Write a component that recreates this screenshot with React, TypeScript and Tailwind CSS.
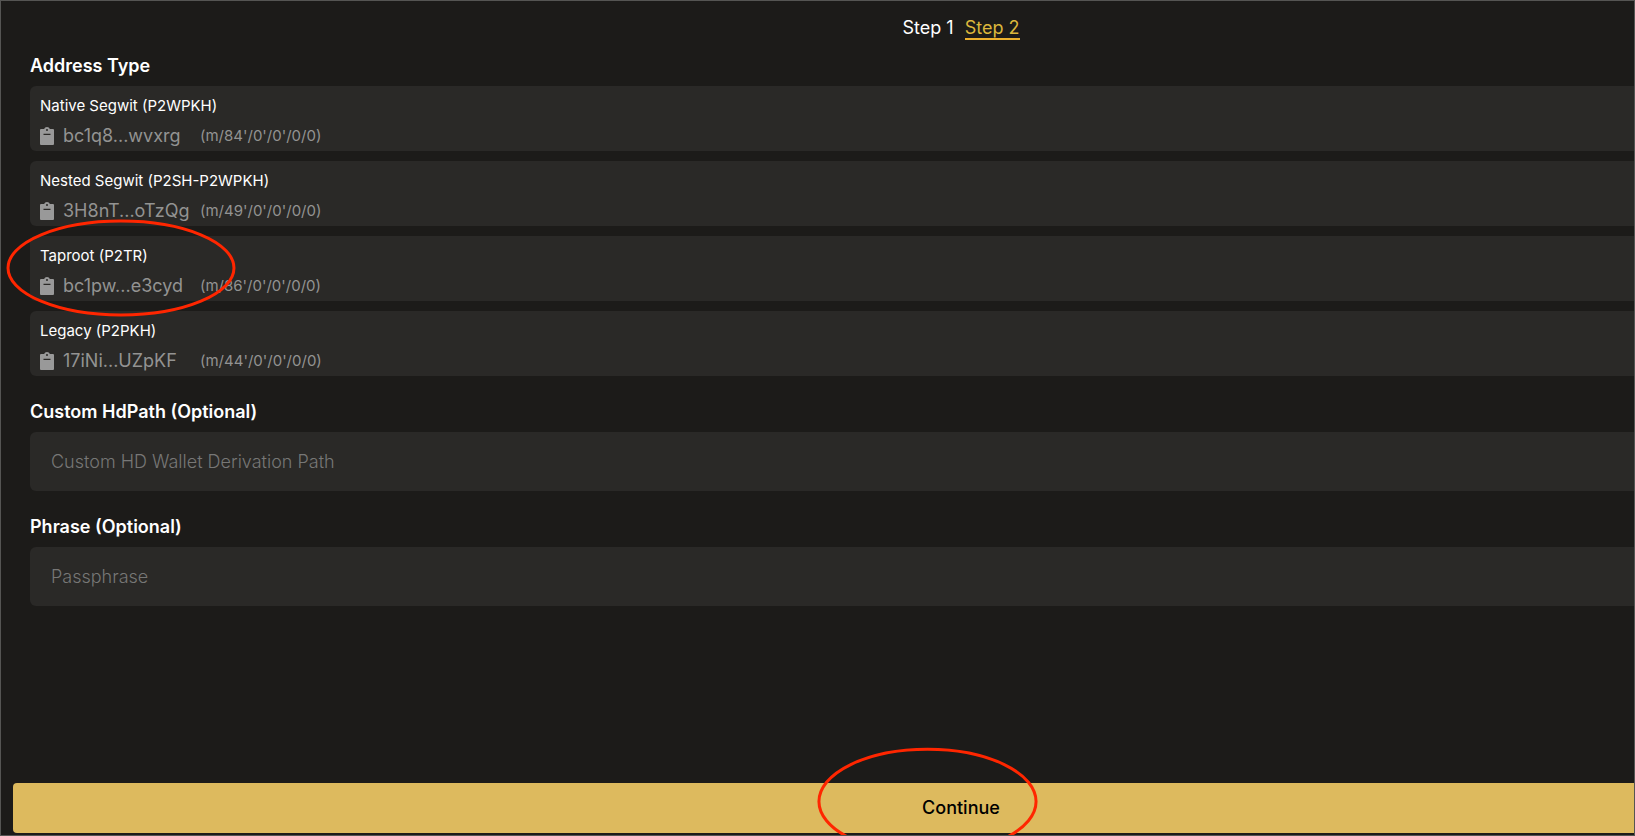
import React, { useState } from 'react';
import clsx from 'clsx';

interface AddressType {
  name: string;
  address: string;
  path: string;
  marked?: boolean;
}

const ADDRESS_TYPES: AddressType[] = [
  { name: 'Native Segwit (P2WPKH)', address: 'bc1q8...wvxrg', path: "(m/84'/0'/0'/0/0)" },
  { name: 'Nested Segwit (P2SH-P2WPKH)', address: '3H8nT...oTzQg', path: "(m/49'/0'/0'/0/0)" },
  { name: 'Taproot (P2TR)', address: 'bc1pw...e3cyd', path: "(m/86'/0'/0'/0/0)", marked: true },
  { name: 'Legacy (P2PKH)', address: '17iNi...UZpKF', path: "(m/44'/0'/0'/0/0)" },
];

const ClipboardIcon: React.FC = () => (
  <svg width="14" height="18" viewBox="0 0 14 18" aria-hidden="true">
    <path
      fill="#999999"
      fillRule="evenodd"
      d="M1 2H4.200C4.500 .8 5.600 0 7 0S9.500 .8 9.800 2H13A1 1 0 0 1 14 3V17A1 1 0 0 1 13 18H1A1 1 0 0 1 0 17V3A1 1 0 0 1 1 2ZM7 2A1 1 0 0 0 7 4A1 1 0 0 0 7 2ZM3.500 6.800V8H10.500V6.800Z"
    />
  </svg>
);

// Hand-drawn style highlight ring, laid over whatever it points at
const Ring: React.FC<{ className: string }> = ({ className }) => (
  <svg className={clsx('pointer-events-none absolute z-10', className)} viewBox="0 0 228 98" preserveAspectRatio="none" aria-hidden="true">
    <ellipse cx="114" cy="49" rx="112" ry="47" fill="none" stroke="#ff2600" strokeWidth="3" vectorEffect="non-scaling-stroke" />
  </svg>
);

const AddressCard: React.FC<{ item: AddressType }> = ({ item }) => (
  <li className="relative rounded-md bg-[#2a2927] px-[10px] pt-2 pb-[3px]">
    <p className="text-[15px] leading-6 text-white">{item.name}</p>
    <div className="mt-[6px] flex items-center text-[#939392]">
      <button type="button" aria-label={`Copy ${item.name} address`} className="mr-[9px]">
        <ClipboardIcon />
      </button>
      <span className="w-[137px] text-[18px] leading-6">{item.address}</span>
      <span className="text-[15px] leading-6">{item.path}</span>
    </div>
    {item.marked && <Ring className="top-[-17px] left-[-24px] h-[98px] w-[230px]" />}
  </li>
);

interface FieldProps {
  id: string;
  label: string;
  placeholder: string;
}

const Field: React.FC<FieldProps> = ({ id, label, placeholder }) => {
  const [value, setValue] = useState('');

  return (
    <div className="mt-6">
      <label htmlFor={id} className="block text-[18px] leading-6 font-semibold text-white">{label}</label>
      <input
        id={id}
        type="text"
        value={value}
        onChange={e => setValue(e.target.value)}
        placeholder={placeholder}
        className="mt-2 block h-[59px] w-full rounded-md bg-[#2a2927] px-[21px] text-[18px] font-light text-white outline-none placeholder:text-[#777776]"
      />
    </div>
  );
};

const App: React.FC = () => {
  return (
    <div className="h-screen overflow-hidden border border-[#555553] bg-[#1c1b19] font-['Inter',sans-serif]">
      <main className="flex h-full min-w-[1920px] flex-col">
        <nav className="flex justify-center gap-[11px] pt-[15px] text-[18px] leading-6">
          <a href="#step-1" className="text-white">Step 1</a>
          <a href="#step-2" className="h-6 border-b-2 border-[#ebb02d] text-[#dcb73c]">Step 2</a>
        </nav>

        <section className="px-[29px] pt-[14px]">
          <h2 className="text-[18px] leading-6 font-semibold text-white">Address Type</h2>
          <ul className="mt-2 space-y-[10px]">
            {ADDRESS_TYPES.map(item => (
              <AddressCard key={item.name} item={item} />
            ))}
          </ul>
          <Field id="hd-path" label="Custom HdPath (Optional)" placeholder="Custom HD Wallet Derivation Path" />
          <Field id="passphrase" label="Phrase (Optional)" placeholder="Passphrase" />
        </section>

        <div className="relative mt-auto px-3 pb-[2px]">
          <button type="button" className="h-[50px] w-full rounded bg-[#ddba5e] pb-[2px] text-[18px] font-medium text-black">Continue</button>
          <Ring className="top-[-36px] left-[816px] h-[109px] w-[221px]" />
        </div>
      </main>
    </div>
  );
};

export default App;
